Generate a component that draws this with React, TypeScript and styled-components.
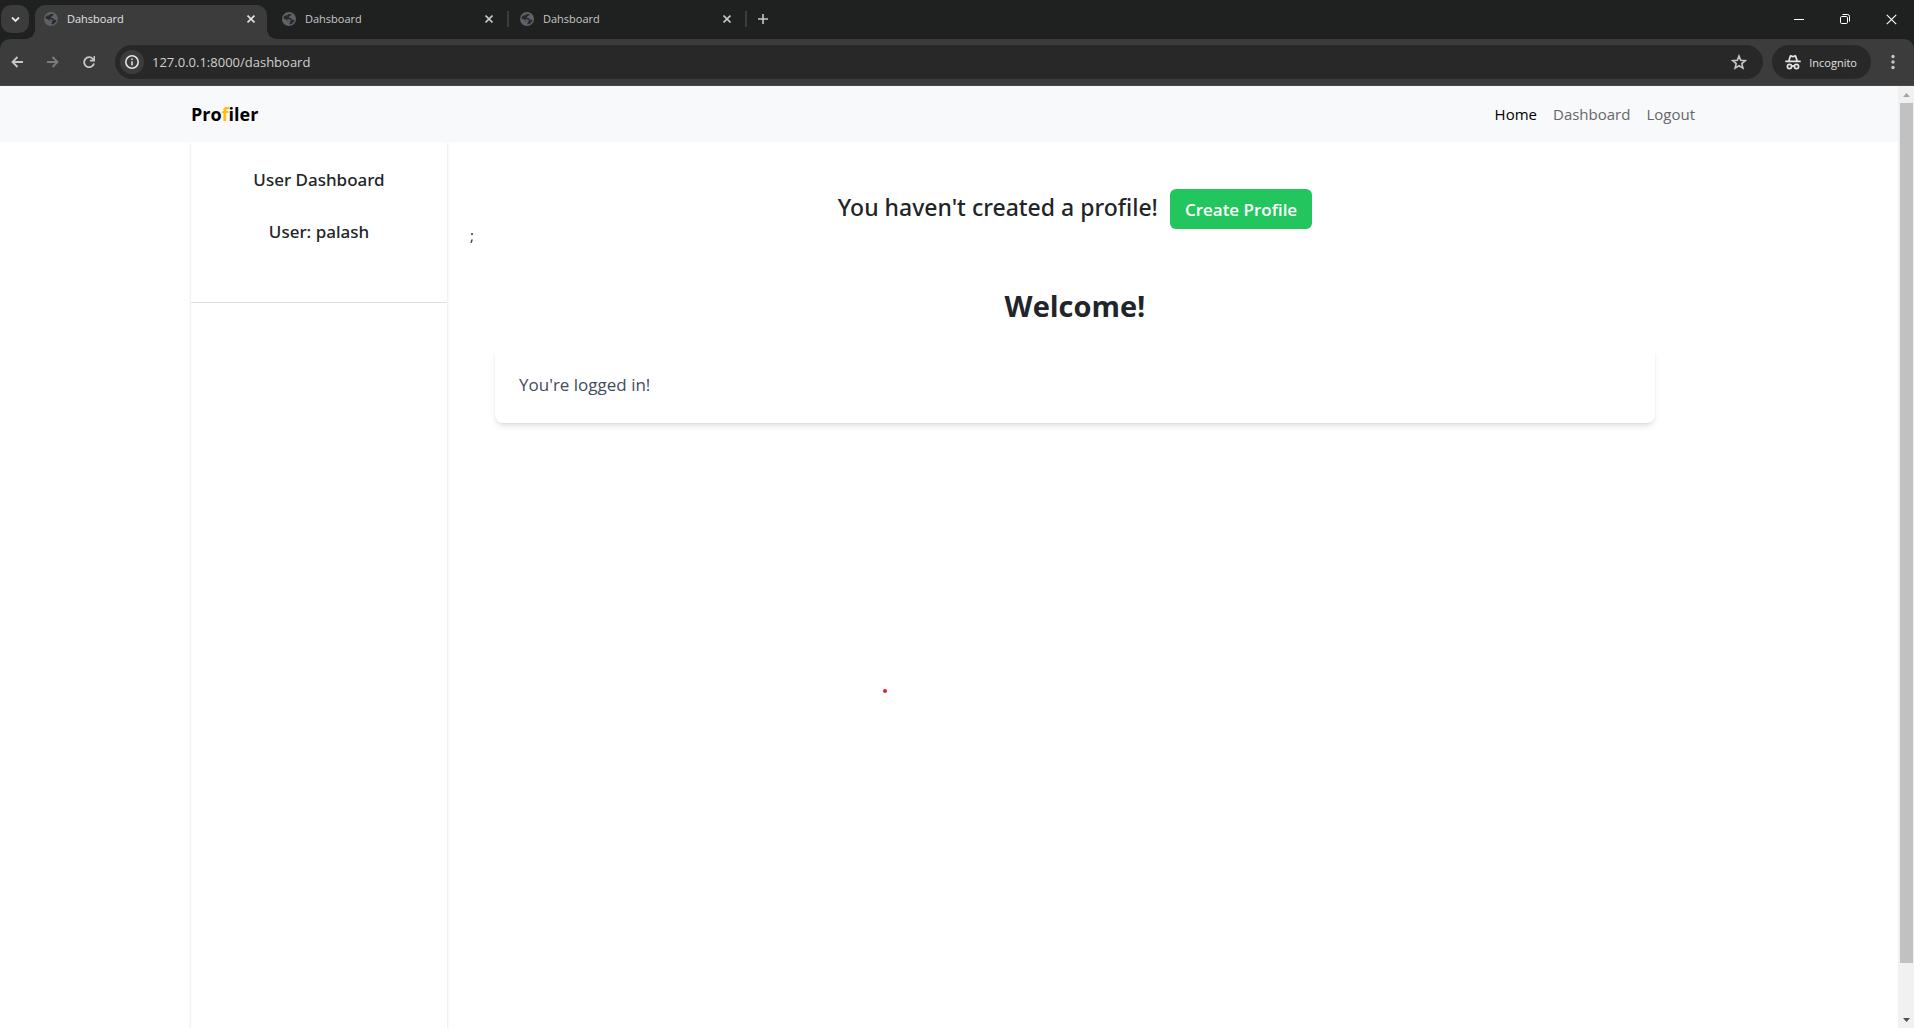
import React from "react";
import styled, { createGlobalStyle, css } from "styled-components";

const GlobalStyle = createGlobalStyle`
  *, *::before, *::after { box-sizing: border-box; }
  body { margin: 0; background: #fff; color: #212529; font-family: "Open Sans", "Noto Sans", sans-serif; }
  button, input { font-family: inherit; }
  button { border: 0; padding: 0; background: none; color: inherit; cursor: pointer; }
  h1, h2, h3, p { margin: 0; }
  a { text-decoration: none; }
  svg { display: block; flex: none; }
`;

const Window = styled.div`
  position: relative;
  display: flex;
  flex-direction: column;
  height: 100vh;
  overflow: hidden;
`;

/* ---------- browser frame ---------- */

const TabStrip = styled.header`
  display: flex;
  height: 39px;
  padding-top: 5px;
  background: #1f2120;
  color: #c7c7c7;
`;

const TabSearch = styled.button`
  display: grid;
  place-items: center;
  width: 28px;
  height: 28px;
  margin: 0 6px 0 1px;
  border-radius: 10px;
  background: #3c3c3c;
  color: #e3e3e3;
`;

const TabList = styled.div`
  display: flex;
`;

const flare = css`
  content: "";
  position: absolute;
  bottom: 0;
  width: 10px;
  height: 10px;
`;

const Tab = styled.div<{ $active?: boolean; $divider?: boolean }>`
  position: relative;
  display: flex;
  align-items: center;
  width: 232px;
  height: 34px;
  margin-right: 6px;
  padding: 0 9px 6px;
  border-radius: 10px 10px 0 0;
  ${(p) =>
    p.$active &&
    css`
      background: #3c3c3c;
      color: #e3e3e3;
      &::before {
        ${flare}
        left: -10px;
        background: radial-gradient(circle at 0 0, transparent 10px, #3c3c3c 10px);
      }
      &::after {
        ${flare}
        right: -10px;
        background: radial-gradient(circle at 100% 0, transparent 10px, #3c3c3c 10px);
      }
    `}
  ${(p) =>
    p.$divider &&
    css`
      &::after {
        content: "";
        position: absolute;
        top: 6px;
        right: -4px;
        width: 2px;
        height: 16px;
        background: #3c3c3c;
      }
    `}
`;

const TabTitle = styled.button`
  display: flex;
  flex: 1;
  align-items: center;
  gap: 9px;
  font-size: 11px;
  line-height: 28px;
`;

const TabClose = styled.button`
  display: grid;
  place-items: center;
  width: 14px;
  height: 14px;
`;

const NewTab = styled.button`
  display: grid;
  place-items: center;
  width: 28px;
  height: 28px;
`;

const WindowControls = styled.div`
  display: flex;
  margin-left: auto;
  color: #fff;
`;

const WindowButton = styled.button`
  display: grid;
  place-items: center;
  width: 46px;
  height: 28px;
`;

const ToolbarBacking = styled.div`
  background: #1f2120;
`;

const Toolbar = styled.div`
  display: flex;
  align-items: center;
  height: 47px;
  padding: 0 13px 0 5px;
  border-bottom: 1px solid #4a4646;
  border-radius: 10px 10px 0 0;
  background: #3c3c3c;
  color: #c7c7c7;
`;

const NavButton = styled.button`
  display: grid;
  place-items: center;
  width: 24px;
  height: 24px;
  margin-right: 12px;
  &:disabled { color: #7c7c7c; }
`;

const Omnibox = styled.div`
  display: flex;
  flex: 1;
  align-items: center;
  height: 34px;
  margin: 0 9px 0 2px;
  padding: 0 16px 0 5px;
  border-radius: 17px;
  background: #282828;
`;

const SiteInfo = styled.button`
  display: grid;
  place-items: center;
  width: 24px;
  height: 24px;
  border-radius: 12px;
  background: #3c3c3c;
`;

const Address = styled.input`
  flex: 1;
  padding: 0 8px;
  border: 0;
  outline: 0;
  background: none;
  color: #d0d0d0;
  font-size: 13px;
  line-height: 20px;
`;

const IconButton = styled.button`
  display: grid;
  place-items: center;
`;

const Incognito = styled.button`
  display: flex;
  align-items: center;
  gap: 8px;
  height: 34px;
  margin-right: 14px;
  padding: 0 14px 0 13px;
  border-radius: 17px;
  background: #282828;
  color: #e3e3e3;
  font-size: 11px;
`;

const Viewport = styled.div`
  display: flex;
  flex: 1;
  min-height: 0;
`;

const ScrollBar = styled.div`
  display: flex;
  flex-direction: column;
  width: 16px;
  background: #f1f1f1;
`;

const ScrollArrow = styled.button<{ $muted?: boolean }>`
  display: grid;
  place-items: center;
  height: 17px;
  color: ${(p) => (p.$muted ? "#a3a3a3" : "#505050")};
`;

const Thumb = styled.div`
  flex: 860;
  margin: 0 1px 0 2px;
  background: #c1c1c1;
`;

const TrackRest = styled.div`
  flex: 48;
`;

/* ---------- site ---------- */

const Site = styled.div`
  display: flex;
  flex: 1;
  flex-direction: column;
`;

const Container = styled.div`
  width: 100%;
  max-width: 1512px;
  margin: 0 auto;
`;

const NavBar = styled.nav`
  display: flex;
  padding-right: 4px;
  background: #f8f9fb;
`;

const NavInner = styled(Container)`
  display: flex;
  align-items: center;
  justify-content: space-between;
  height: 56px;
`;

const Brand = styled.a`
  color: #000;
  font-size: 18px;
  font-weight: 700;
  line-height: 32px;
  font-variant-ligatures: none;
  span { color: #ffc107; }
`;

const NavLinks = styled.div`
  display: flex;
  gap: 16px;
  padding-right: 8px;
`;

const NavLink = styled.a<{ $active?: boolean }>`
  color: ${(p) => (p.$active ? "#000" : "#66676a")};
  font-size: 15px;
  line-height: 24px;
`;

const Body = styled.div`
  display: flex;
  flex: 1;
  padding-right: 4px;
  overflow: hidden;
`;

const Columns = styled(Container)`
  display: flex;
`;

const SideBar = styled.aside`
  width: 256px;
  box-shadow: 0 1px 3px rgba(0, 0, 0, 0.1), 0 1px 2px rgba(0, 0, 0, 0.06);
  text-align: center;
`;

const SideHead = styled.div`
  display: flex;
  flex-direction: column;
  gap: 24px;
  height: 161px;
  padding-top: 24px;
  border-bottom: 1px solid #dedfe0;
`;

const SideTitle = styled.h3`
  font-family: "Noto Sans", "Open Sans", sans-serif;
  font-size: 17px;
  font-weight: 500;
  line-height: 28px;
`;

const Main = styled.main`
  position: relative;
  flex: 1;
  padding: 47px 48px 0;
`;

const Stray = styled.span`
  position: absolute;
  top: 81px;
  left: 23px;
  font-size: 15px;
  line-height: 24px;
`;

const Prompt = styled.div`
  display: flex;
  align-items: flex-start;
  justify-content: center;
  gap: 12px;
  height: 40px;
`;

const PromptText = styled.h3`
  font-family: "Noto Sans", "Open Sans", sans-serif;
  font-size: 23px;
  font-weight: 500;
  line-height: 36px;
`;

const CreateButton = styled.button`
  height: 40px;
  padding: 0 15px;
  border-radius: 6px;
  background: #22c55e;
  color: #fff;
  font-size: 17px;
  font-weight: 600;
`;

const Welcome = styled.h1`
  margin-top: 59px;
  font-size: 29px;
  font-weight: 700;
  line-height: 36px;
  text-align: center;
`;

const Card = styled.section`
  margin-top: 23px;
  padding: 24px;
  border-radius: 8px;
  background: #fff;
  box-shadow: 0 4px 6px -1px rgba(0, 0, 0, 0.1), 0 2px 4px -2px rgba(0, 0, 0, 0.1);
  color: #434c5b;
  font-size: 17px;
  line-height: 28px;
`;

const RedDot = styled.span`
  position: absolute;
  top: 689px;
  left: 883px;
  width: 4px;
  height: 4px;
  border-radius: 2px;
  background: #ed1c24;
`;

/* ---------- icons ---------- */

const Globe = () => (
  <svg width="14" height="14" viewBox="0 0 14 14">
    <circle cx="7" cy="7" r="7" fill="#5f6368" />
    <path
      d="M5 3.200C6 2 8 1.600 9.600 2.200L9 3.600 7.400 4.200 7 5.600 9.400 6.400 10.200 7.800 12.600 8C12.200 10.400 10 12.400 7.600 12.500L7 11.600 8.400 10.400 7.600 9.200 5.400 9.400 4.200 7.600 1.400 6.800C1.500 5.600 2 4.600 2.800 3.800z"
      fill="#2a2b2c"
    />
    <path d="M5.200 7.600L7.200 7.200 9 8.400 8.800 9.200 7.600 9.200 5.400 9.400z" fill="#5f6368" />
  </svg>
);

const Cross = ({ size = 8, width = 2 }: { size?: number; width?: number }) => (
  <svg width={size} height={size} viewBox="0 0 10 10" stroke="currentColor" strokeWidth={width} fill="none">
    <path d="M.7.7l8.600 8.600M9.300.7L.7 9.300" />
  </svg>
);

const Line = ({ d, w = 12, h = 12, stroke = 1.8 }: { d: string; w?: number; h?: number; stroke?: number }) => (
  <svg width={w} height={h} viewBox={`0 0 ${w} ${h}`} stroke="currentColor" strokeWidth={stroke} fill="none">
    <path d={d} />
  </svg>
);

const Info = () => (
  <svg width="14" height="14" viewBox="0 0 14 14" fill="none" stroke="#e3e3e3">
    <circle cx="7" cy="7" r="6.200" strokeWidth="1.600" />
    <path d="M7 6.200v4.200M7 3.600v1.500" strokeWidth="1.500" />
  </svg>
);

const Spy = () => (
  <svg width="16" height="16" viewBox="0 0 16 16">
    <path
      d="M.3 6.600h2.800L4.600 1.800Q5 .8 6 1.100L8 1.700l2-.6q1-.3 1.400.7l1.500 4.800h2.800v1.700H.3zM4.900 6.600h6.200L10 2.900l-2 .6-2-.6z"
      fill="currentColor"
      fillRule="evenodd"
    />
    <g fill="none" stroke="currentColor" strokeWidth="1.700">
      <circle cx="4.500" cy="12.500" r="2.100" />
      <circle cx="11.500" cy="12.500" r="2.100" />
      <path d="M6.600 12.100q1.400-.6 2.800 0" />
    </g>
  </svg>
);

const tabs = [
  { title: "Dahsboard", active: true },
  { title: "Dahsboard", divider: true },
  { title: "Dahsboard", divider: true },
];

const links = [
  { label: "Home", active: true },
  { label: "Dashboard" },
  { label: "Logout" },
];

export default function App() {
  return (
    <Window>
      <GlobalStyle />
      <TabStrip>
        <TabSearch aria-label="Search tabs">
          <Line d="M1 1.500L4.500 5 8 1.500" w={9} h={7} />
        </TabSearch>
        <TabList>
          {tabs.map((tab, i) => (
            <Tab key={i} $active={tab.active} $divider={tab.divider}>
              <TabTitle>
                <Globe />
                {tab.title}
              </TabTitle>
              <TabClose aria-label="Close tab">
                <Cross />
              </TabClose>
            </Tab>
          ))}
        </TabList>
        <NewTab aria-label="New tab">
          <Line d="M5 0v10M0 5h10" w={10} h={10} stroke={1.6} />
        </NewTab>
        <WindowControls>
          <WindowButton aria-label="Minimize">
            <Line d="M0 .5h10" w={10} h={1} stroke={1} />
          </WindowButton>
          <WindowButton aria-label="Restore">
            <svg width="10" height="10" viewBox="0 0 10 10" fill="none" stroke="currentColor">
              <rect x=".5" y="2.500" width="7" height="7" rx="1.200" />
              <path d="M2.500.5H7.500a2 2 0 0 1 2 2v5" />
            </svg>
          </WindowButton>
          <WindowButton aria-label="Close">
            <Cross size={11} width={1} />
          </WindowButton>
        </WindowControls>
      </TabStrip>
      <ToolbarBacking>
        <Toolbar>
          <NavButton aria-label="Back">
            <Line d="M12 6H1.500M6.500 1L1.500 6l5 5" />
          </NavButton>
          <NavButton aria-label="Forward" disabled>
            <Line d="M0 6h10.500M5.500 1l5 5-5 5" />
          </NavButton>
          <NavButton aria-label="Reload">
            <Line d="M11 7.500A5 5 0 1 1 10 3L11.500 4.700M11.500 0V4.700H7" w={12} h={12} />
          </NavButton>
          <Omnibox>
            <SiteInfo aria-label="View site information">
              <Info />
            </SiteInfo>
            <Address aria-label="Address" defaultValue="127.0.0.1:8000/dashboard" />
            <IconButton aria-label="Bookmark this tab">
              <svg width="16" height="16" viewBox="0 0 16 16" fill="none" stroke="currentColor" strokeWidth="1.600">
                <path d="M8 2l1.700 4.200 4.600.4-3.500 3 1.100 4.500L8 11.700l-3.900 2.400 1.100-4.500-3.500-3 4.600-.4z" />
              </svg>
            </IconButton>
          </Omnibox>
          <Incognito>
            <Spy />
            Incognito
          </Incognito>
          <IconButton aria-label="Menu">
            <svg width="16" height="16" viewBox="0 0 16 16" fill="currentColor">
              <circle cx="8" cy="2.500" r="1.700" />
              <circle cx="8" cy="8" r="1.700" />
              <circle cx="8" cy="13.500" r="1.700" />
            </svg>
          </IconButton>
        </Toolbar>
      </ToolbarBacking>
      <Viewport>
        <Site>
          <NavBar>
            <NavInner>
              <Brand href="#">
                Pro<span>f</span>iler
              </Brand>
              <NavLinks>
                {links.map((link) => (
                  <NavLink key={link.label} href="#" $active={link.active}>
                    {link.label}
                  </NavLink>
                ))}
              </NavLinks>
            </NavInner>
          </NavBar>
          <Body>
            <Columns>
              <SideBar>
                <SideHead>
                  <SideTitle>User Dashboard</SideTitle>
                  <SideTitle>User: palash</SideTitle>
                </SideHead>
              </SideBar>
              <Main>
                <Stray>;</Stray>
                <Prompt>
                  <PromptText>You haven't created a profile!</PromptText>
                  <CreateButton>Create Profile</CreateButton>
                </Prompt>
                <Welcome>Welcome!</Welcome>
                <Card>
                  <p>You're logged in!</p>
                </Card>
              </Main>
            </Columns>
          </Body>
        </Site>
        <ScrollBar>
          <ScrollArrow $muted aria-label="Scroll up">
            <svg width="7" height="4" viewBox="0 0 7 4" fill="currentColor">
              <path d="M3.500 0L7 4H0z" />
            </svg>
          </ScrollArrow>
          <Thumb />
          <TrackRest />
          <ScrollArrow aria-label="Scroll down">
            <svg width="7" height="4" viewBox="0 0 7 4" fill="currentColor">
              <path d="M3.500 4L0 0h7z" />
            </svg>
          </ScrollArrow>
        </ScrollBar>
      </Viewport>
      <RedDot />
    </Window>
  );
}
